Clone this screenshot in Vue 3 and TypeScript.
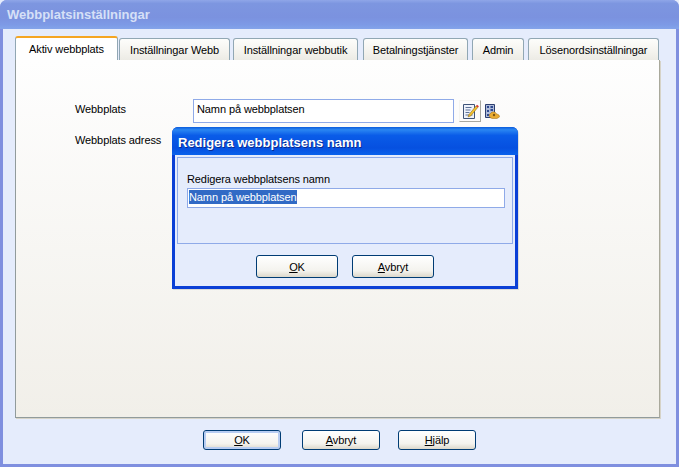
<script setup lang="ts">
const tabs = [
  { label: 'Aktiv webbplats', width: 103, gap: 0, active: true },
  { label: 'Inställningar Webb', width: 111, gap: 1, active: false },
  { label: 'Inställningar webbutik', width: 125, gap: 3, active: false },
  { label: 'Betalningstjänster', width: 105, gap: 5, active: false },
  { label: 'Admin', width: 52, gap: 4, active: false },
  { label: 'Lösenordsinställningar', width: 131, gap: 4, active: false },
]
</script>

<template>
  <div class="window">
    <header class="titlebar">Webbplatsinställningar</header>
    <main class="client">
      <nav class="tabstrip">
        <div
          v-for="tab in tabs"
          :key="tab.label"
          class="tab"
          :class="{ active: tab.active }"
          :style="{ width: tab.width + 'px', marginLeft: tab.gap + 'px' }"
        >{{ tab.label }}</div>
      </nav>
      <section class="panel">
        <div class="row first">
          <span class="label">Webbplats</span>
          <div class="field">Namn på webbplatsen</div>
          <span class="iconbtn">
            <svg width="20" height="20" viewBox="0 0 20 20">
              <path d="M3.500 3.500h11v14h-11z" fill="#eef2fa" stroke="#3f5478" />
              <path d="M5.500 6.500h6M5.500 9h5M5.500 11.500h4M5.500 14h7" stroke="#5f7398" fill="none" />
              <path d="M9 13.500l7-8.500 1.800 1.400-7 8.500-2.800 1z" fill="#f3c230" stroke="#7a5a10" stroke-width=".5" />
              <path d="M16 5l1-1.300 1.900 1.500-1 1.300z" fill="#d8322a" />
            </svg>
          </span>
          <svg class="gearicon" width="15" height="15" viewBox="0 0 15 15">
            <path d="M0.500 0.500h9v13h-9z" fill="#aebbd8" stroke="#2d3f70" />
            <path d="M2 2h2v2H2zM2 6h2v2H2zM2 10h2v2H2zM5.500 2h2.500v2H5.500zM5.500 5h2.500v2H5.500z" fill="#2f4a90" />
            <path d="M4 11l3-3 3 0 1 1.500 3 1.500 .5 2-2.500 1.500H7L5 13.500z" fill="#e9ac33" stroke="#9a6a14" stroke-width=".5" />
            <circle cx="9" cy="11" r="1.200" fill="#7c5512" />
          </svg>
        </div>
        <div class="row">
          <span class="label">Webbplats adress</span>
        </div>
      </section>
      <footer class="actions">
        <button class="btn default" type="button"><u>O</u>K</button>
        <button class="btn" type="button"><u>A</u>vbryt</button>
        <button class="btn" type="button"><u>H</u>jälp</button>
      </footer>
    </main>

    <div class="dialog">
      <div class="dlg-title">Redigera webbplatsens namn</div>
      <div class="dlg-body">
        <div class="dlg-group">
          <div class="dlg-label">Redigera webbplatsens namn</div>
          <div class="dlg-input"><span class="selected">Namn på webbplatsen</span></div>
        </div>
        <div class="dlg-actions">
          <button class="btn dlg-btn" type="button"><u>O</u>K</button>
          <button class="btn dlg-btn" type="button"><u>A</u>vbryt</button>
        </div>
      </div>
    </div>
  </div>
</template>

<style>
html, body { margin: 0; background: #e5ecfc; }
</style>

<style scoped>
.window {
  position: relative;
  width: 679px;
  height: 467px;
  display: flex;
  flex-direction: column;
  box-sizing: border-box;
  overflow: hidden;
  border-radius: 7px 7px 0 0;
  background: #7f8fdf;
  font-family: "Liberation Sans", Arial, sans-serif;
  font-size: 11px;
  letter-spacing: -0.1px;
  color: #000;
}
.titlebar {
  height: 29px;
  flex: none;
  box-sizing: border-box;
  padding: 7px 0 0 7px;
  background: linear-gradient(180deg, #8fa6e8 0%, #7d96e0 12%, #7b92df 60%, #7d9ae6 85%, #83a4ea 100%);
  color: #d6e0f7;
  font-weight: bold;
  font-size: 13px;
  line-height: 16px;
  letter-spacing: 0;
}
.client {
  flex: 1;
  display: flex;
  flex-direction: column;
  margin: 0 3px 3px;
  padding: 7px 0 0 12px;
  background: #e5ecfc;
}
.tabstrip {
  display: flex;
  align-items: flex-end;
  height: 24px;
  flex: none;
}
.tab {
  box-sizing: border-box;
  height: 22px;
  flex: none;
  text-align: center;
  line-height: 23px;
  border: 1px solid #91a7b4;
  border-bottom: 0;
  border-radius: 3px 3px 0 0;
  background: linear-gradient(180deg, #fdfdfb 0%, #f4f3ee 60%, #ecebe5 100%);
}
.tab.active {
  height: 24px;
  line-height: 22px;
  background: #fff;
  border-color: #91a7b4;
  border-top: 2px solid #f5a623;
}
.panel {
  width: 645px;
  height: 358px;
  flex: none;
  box-sizing: border-box;
  padding: 39px 0 0 59px;
  background: linear-gradient(180deg, #fefefe 0%, #f1efe9 100%);
  border-right: 1px solid #a9a99c;
  border-bottom: 1px solid #919b9c;
  border-left: 1px solid #919b9c;
  box-shadow: 1px 1px 0 #d6d3c8;
}
.row {
  display: flex;
  align-items: center;
  height: 24px;
}
.row.first { margin-bottom: 5px; }
.row.first .label { margin-bottom: 4px; }
.label { width: 118px; flex: none; }
.field {
  box-sizing: border-box;
  width: 261px;
  height: 24px;
  flex: none;
  padding-left: 3px;
  line-height: 18px;
  background: #fff;
  border: 1px solid #8faae8;
}
.iconbtn {
  width: 22px;
  height: 22px;
  margin-left: 5px;
  flex: none;
  box-sizing: border-box;
  display: flex;
  align-items: center;
  justify-content: center;
  border: 1px solid;
  border-color: #f4f4f0 #a8a8a0 #a8a8a0 #f4f4f0;
}
.gearicon { margin-left: 4px; flex: none; }
.actions {
  display: flex;
  margin: 12px 0 0 188px;
  gap: 21px;
}
.actions .btn:nth-child(3) { margin-left: -3px; }
.btn {
  box-sizing: border-box;
  width: 78px;
  height: 20px;
  padding: 0;
  font: inherit;
  letter-spacing: inherit;
  color: #000;
  border: 1px solid #003c74;
  border-radius: 3px;
  background: linear-gradient(180deg, #fff 0%, #f4f3ee 70%, #dcd8cb 100%);
}
.btn.default { box-shadow: inset 0 0 0 2px #b8cdf2; }
.dialog {
  position: absolute;
  left: 172px;
  top: 127px;
  width: 346px;
  height: 162px;
  box-sizing: border-box;
  display: flex;
  flex-direction: column;
  border-radius: 6px 6px 0 0;
  background: #0a3fd6;
  box-shadow: 1px 1px 0 rgba(120,120,110,.2);
}
.dlg-title {
  height: 28px;
  flex: none;
  box-sizing: border-box;
  padding: 8px 0 0 6px;
  border-radius: 6px 6px 0 0;
  background: linear-gradient(180deg, #0a5cdc 0%, #2a86f2 10%, #0a5ce8 30%, #0650e0 75%, #0a62ec 100%);
  color: #fff;
  font-weight: bold;
  font-size: 13px;
  line-height: 16px;
  letter-spacing: 0;
  text-shadow: 1px 1px 0 #0a2a90;
}
.dlg-body {
  flex: 1;
  margin: 0 3px 3px;
  background: #e5ecfc;
  display: flex;
  flex-direction: column;
}
.dlg-group {
  box-sizing: border-box;
  height: 87px;
  margin: 2px 2px 0;
  padding: 14px 0 0 9px;
  border: 1px solid #8faae8;
}
.dlg-label { line-height: 14px; margin-bottom: 2px; }
.dlg-input {
  box-sizing: border-box;
  width: 318px;
  height: 20px;
  padding: 1px;
  background: #fff;
  border: 1px solid #8faae8;
  line-height: 14px;
}
.selected {
  display: inline-block;
  background: #316ac5;
  color: #fff;
  height: 14px;
}
.dlg-actions {
  display: flex;
  margin: 11px 0 0 81px;
  gap: 14px;
}
.dlg-btn { width: 82px; height: 23px; }
</style>
